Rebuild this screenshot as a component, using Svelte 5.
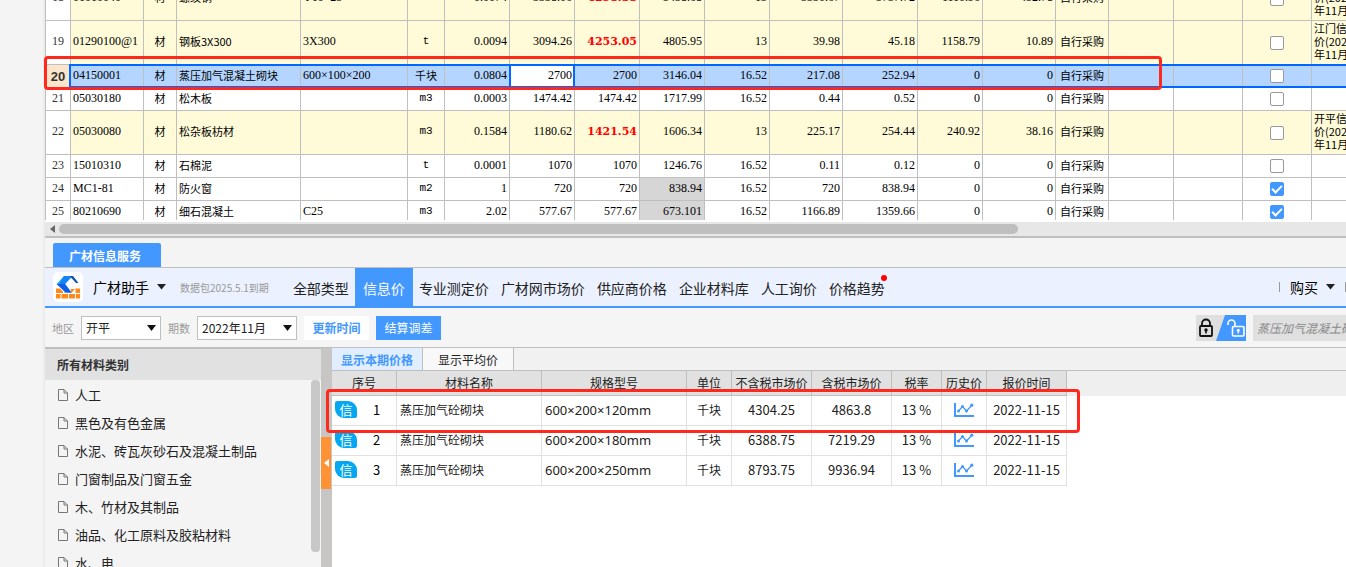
<script lang="ts">
	type Row = {
		no: number;
		code: string;
		name: string;
		spec: string;
		unit: string;
		nums: string[];
		tall?: boolean;
		checked?: boolean;
		shaded?: boolean;
		note?: string[];
	};

	const colWidths = [25, 73, 33, 124, 107, 37, 65, 65, 65, 65, 65, 73, 75, 65, 73, 53, 65, 69, 69];

	// nums: 数量, 不含税预算价, 不含税市场价, 含税市场价, 税率, 不含税合计, 含税合计, 价差, 价差合计
	let rows: Row[] = $state([
		{ no: 18, code: '01010040', name: '螺纹钢', spec: 'Φ10~25', unit: 't', nums: ['0.0074', '3338.06', '4258.38', '5438.68', '13', '3330.67', '3737.72', '1110.96', '432.78'], tall: true, note: ['江门信息', '价(2022', '年11月)'] },
		{ no: 19, code: '01290100@1', name: '钢板3X300', spec: '3X300', unit: 't', nums: ['0.0094', '3094.26', '4253.05', '4805.95', '13', '39.98', '45.18', '1158.79', '10.89'], tall: true, note: ['江门信息', '价(2022', '年11月)'] },
		{ no: 20, code: '04150001', name: '蒸压加气混凝土砌块', spec: '600×100×200', unit: '千块', nums: ['0.0804', '2700', '2700', '3146.04', '16.52', '217.08', '252.94', '0', '0'] },
		{ no: 21, code: '05030180', name: '松木板', spec: '', unit: 'm3', nums: ['0.0003', '1474.42', '1474.42', '1717.99', '16.52', '0.44', '0.52', '0', '0'] },
		{ no: 22, code: '05030080', name: '松杂板枋材', spec: '', unit: 'm3', nums: ['0.1584', '1180.62', '1421.54', '1606.34', '13', '225.17', '254.44', '240.92', '38.16'], tall: true, note: ['开平信息', '价(2022', '年11月)'] },
		{ no: 23, code: '15010310', name: '石棉泥', spec: '', unit: 't', nums: ['0.0001', '1070', '1070', '1246.76', '16.52', '0.11', '0.12', '0', '0'] },
		{ no: 24, code: 'MC1-81', name: '防火窗', spec: '', unit: 'm2', nums: ['1', '720', '720', '838.94', '16.52', '720', '838.94', '0', '0'], checked: true, shaded: true },
		{ no: 25, code: '80210690', name: '细石混凝土', spec: 'C25', unit: 'm3', nums: ['2.02', '577.67', '577.67', '673.101', '16.52', '1166.89', '1359.66', '0', '0'], checked: true, shaded: true }
	]);

	const selected = 20;

	const navItems = ['全部类型', '信息价', '专业测定价', '广材网市场价', '供应商价格', '企业材料库', '人工询价', '价格趋势'];
	let activeNav = $state('信息价');

	const categories = ['人工', '黑色及有色金属', '水泥、砖瓦灰砂石及混凝土制品', '门窗制品及门窗五金', '木、竹材及其制品', '油品、化工原料及胶粘材料', '水、电'];

	const priceCols = [
		{ label: '序号', width: 65 },
		{ label: '材料名称', width: 145 },
		{ label: '规格型号', width: 145 },
		{ label: '单位', width: 45 },
		{ label: '不含税市场价', width: 80 },
		{ label: '含税市场价', width: 80 },
		{ label: '税率', width: 50 },
		{ label: '历史价', width: 45 },
		{ label: '报价时间', width: 80 }
	];

	const prices = [
		{ spec: '600×200×120mm', net: '4304.25', gross: '4863.8' },
		{ spec: '600×200×180mm', net: '6388.75', gross: '7219.29' },
		{ spec: '600×200×250mm', net: '8793.75', gross: '9936.94' }
	];
</script>

<div class="app">
	<div class="gutter"></div>
	<main>
		<section class="top">
			<div class="grid-view">
				<table class="grid">
					<colgroup>
						{#each colWidths as w}<col style="width: {w}px" />{/each}
						<col />
					</colgroup>
					<tbody>
						{#each rows as row}
							<tr class:tall={row.tall} class:selected={row.no === selected}>
								<td class="no">{row.no}</td>
								<td class="code">{row.code}</td>
								<td class="center">材</td>
								<td>{row.name}</td>
								<td class="code">{row.spec}</td>
								<td class="center" class:unit={row.unit.length < 3 && row.unit !== '千块'}>{row.unit}</td>
								{#each row.nums as n, i}
									{#if row.no === selected && i === 1}
										<td class="num editing"><input type="text" aria-label="不含税预算价" bind:value={row.nums[1]} /></td>
									{:else}
										<td class="num" class:changed={row.tall && i === 2} class:shaded={row.shaded && i === 3}>{n}</td>
									{/if}
								{/each}
								<td class="center">自行采购</td>
								<td></td>
								<td></td>
								<td class="center"><input type="checkbox" aria-label="锁定 {row.no}" bind:checked={row.checked} /></td>
								<td class="note">{#each row.note ?? [] as line}<div>{line}</div>{/each}</td>
							</tr>
						{/each}
					</tbody>
				</table>
			</div>
			<div class="hscroll">
				<svg width="6" height="8" viewBox="0 0 6 8"><path d="M5 0v8L0 4z" fill="#666" /></svg>
				<div class="thumb"></div>
			</div>
			<div class="mark mark-row"></div>
		</section>

		<div class="service-tabs">
			<button class="service-tab">广材信息服务</button>
		</div>

		<nav>
			<div class="logo">
				<svg width="30" height="30" viewBox="0 0 30 30">
					<path d="M3 16.500h4l3 3V21H3zM22.500 16.500H27V21h-4.500zM11 20l1.500 1H11zM17.500 17h4.500L18.500 21z" fill="#ff8a1a" />
					<path d="M3 22h4.500v4.500H3zM8.500 22h6.500v4.500H8.500zM16 22h6v4.500h-6zM23 22h4v4.500h-4z" fill="#ff8a1a" />
					<path d="M3.500 12L11 4h8.500l-7.500 8z" fill="#28b4ee" />
					<path d="M11 4h8.500l-7.500 8 6.500 8.500h-6L6 12z" fill="#1683f2" />
					<path d="M3.500 12H12l6.500 8.500h-6z" fill="#0d5fe6" />
					<path d="M17 4h3l5.500 7h-2.500l-5-5.500z" fill="#134fb0" />
				</svg>
			</div>
			<button class="brand">广材助手 <svg width="9" height="6" viewBox="0 0 9 6"><path d="M0 0h9L4.500 5.500z" fill="#222" /></svg></button>
			<span class="expire">数据包2025.5.1到期</span>
			<div class="nav-items">
				{#each navItems as item}
					<button class="nav-item" class:active={item === activeNav} onclick={() => (activeNav = item)}>
						{item}{#if item === '价格趋势'}<i class="dot"></i>{/if}
					</button>
				{/each}
			</div>
			<div class="buy">
				<i class="bar"></i>
				<button class="brand">购买 <svg width="9" height="6" viewBox="0 0 9 6"><path d="M0 0h9L4.500 5.500z" fill="#222" /></svg></button>
				<i class="bar"></i>
			</div>
		</nav>

		<div class="toolbar">
			<label for="area">地区</label>
			<div class="select area">
				<select id="area"><option>开平</option></select>
				<svg width="9" height="6" viewBox="0 0 9 6"><path d="M0 0h9L4.500 6z" fill="#111" /></svg>
			</div>
			<label for="period">期数</label>
			<div class="select period">
				<select id="period"><option>2022年11月</option></select>
				<svg width="9" height="6" viewBox="0 0 9 6"><path d="M0 0h9L4.500 6z" fill="#111" /></svg>
			</div>
			<button class="tool light">更新时间</button>
			<button class="tool solid">结算调差</button>
			<button class="lock" aria-label="锁定">
				<svg width="50" height="26" viewBox="0 0 50 26">
					<path d="M0 0h50v26H0z" fill="#dfdfdf" />
					<path d="M29 0h21v26H20z" fill="#4398ff" />
					<rect x="4" y="11" width="12" height="10" rx="1" fill="none" stroke="#111" stroke-width="1.800" />
					<path d="M6 11V8.500a4 4 0 0 1 8 0V11" fill="none" stroke="#111" stroke-width="1.800" />
					<circle cx="10" cy="15" r="1.700" fill="#111" />
					<path d="M10 15v3.500" stroke="#111" stroke-width="1.500" />
					<rect x="36.500" y="11.500" width="11.500" height="9.500" rx="1" fill="none" stroke="#fff" stroke-width="1.600" />
					<path d="M32 10V8.500a3.500 3.500 0 0 1 7 0V11.500" fill="none" stroke="#fff" stroke-width="1.600" />
					<circle cx="42.300" cy="15.300" r="1.500" fill="#fff" />
					<path d="M42.300 15v3.500" stroke="#fff" stroke-width="1.300" />
				</svg>
			</button>
			<input class="search" type="text" aria-label="搜索材料" value="蒸压加气混凝土砌块" />
		</div>

		<section class="bottom">
			<aside>
				<h2>所有材料类别</h2>
				<div class="tree">
					<ul>
						{#each categories as c}
							<li>
								<svg width="10" height="12" viewBox="0 0 10 12"><path d="M.5.5h5.500l3.500 3.500v7.500h-9zM6 .5V4h3.500" fill="none" stroke="#777" /></svg>
								<span>{c}</span>
							</li>
						{/each}
					</ul>
					<div class="vthumb"></div>
				</div>
			</aside>
			<div class="splitter">
				<button aria-label="收起"><svg width="5" height="8" viewBox="0 0 5 8"><path d="M5 0v8L0 4z" fill="#fff" /></svg></button>
			</div>
			<div class="prices">
				<div class="price-tabs">
					<button class="active">显示本期价格</button>
					<button>显示平均价</button>
				</div>
				<div class="price-view">
					<table class="price-table">
						<colgroup>
							{#each priceCols as c}<col style="width: {c.width}px" />{/each}
						</colgroup>
						<thead>
							<tr>{#each priceCols as c}<th>{c.label}</th>{/each}</tr>
						</thead>
						<tbody>
							{#each prices as p, i}
								<tr>
									<td><div class="seq"><span class="badge">信</span><span class="idx">{i + 1}</span></div></td>
									<td class="text">蒸压加气砼砌块</td>
									<td class="text size">{p.spec}</td>
									<td>千块</td>
									<td class="val">{p.net}</td>
									<td class="val">{p.gross}</td>
									<td class="val">13 %</td>
									<td>
										<svg class="chart" width="20" height="14" viewBox="0 0 20 14" fill="none" stroke="#4398ff">
											<path d="M1 0v13h19" stroke-width="2" />
											<path d="M4.500 8l4-4.500 4 4.500L18 2" stroke-width="1.200" />
											<g fill="#4398ff" stroke="none">
												<circle cx="4.500" cy="8" r="1.500" /><circle cx="8.500" cy="3.500" r="1.500" />
												<circle cx="12.500" cy="8" r="1.500" /><circle cx="17.800" cy="2.200" r="1.600" />
											</g>
										</svg>
									</td>
									<td class="val">2022-11-15</td>
								</tr>
							{/each}
						</tbody>
					</table>
				</div>
				<div class="mark mark-price"></div>
			</div>
		</section>
	</main>
</div>

<style>
	:global(body) { overflow: hidden; }
	.app {
		display: flex;
		height: 100vh;
		font-family: 'Noto Sans CJK SC', sans-serif;
		font-size: 12px;
		color: #222;
		background: #f5f5f5;
	}
	.app * { box-sizing: border-box; }
	button { font: inherit; color: inherit; border: 0; padding: 0; background: none; white-space: nowrap; }
	svg { display: block; flex: none; }
	.gutter { flex: none; width: 45px; border-right: 2px solid #ececec; background: #f4f4f4; }
	main { flex: 1; min-width: 0; display: flex; flex-direction: column; }

	.top { position: relative; flex: none; background: #fff; border-bottom: 2px solid #bfbfbf; }
	.grid-view { height: 220px; overflow: hidden; margin-bottom: 2px; }
	.grid {
		width: 100%;
		margin-top: -23px;
		table-layout: fixed;
		border-collapse: separate;
		border-spacing: 0;
		font-size: 11px;
		line-height: 13px;
		color: #000;
	}
	.grid tr { height: 23px; }
	.grid tr.tall { height: 44px; background: #fffbd8; }
	.grid td {
		padding: 0 2px 2px;
		border-left: 1px solid #bfbfbf;
		border-bottom: 1px solid #bfbfbf;
		white-space: nowrap;
		overflow: hidden;
	}
	.grid .no, .grid .code, .grid .num { font-family: 'Liberation Serif', 'Noto Sans CJK SC', serif; font-size: 12px; }
	.grid .no { text-align: center; background: #fff; color: #333; }
	.grid .unit { font-family: 'Liberation Mono', monospace; }
	.grid .center { text-align: center; }
	.grid .num { text-align: right; }
	.grid .changed { color: #f00; font: bold 11px/13px 'DejaVu Serif', serif; }
	.grid .shaded { background: #d6d6d6; }
	.grid .note { padding-right: 0; }
	.grid .selected { position: relative; background: #b3d5ff; }
	.grid .selected .no { padding-bottom: 0; background: #fde5cb; font: bold 13px/13px 'Liberation Sans', sans-serif; }
	.grid .selected .note::after {
		content: '';
		position: absolute;
		inset: -1px 0 0 24px;
		border: 2px solid #0067ff;
		border-right: 0;
		pointer-events: none;
	}
	.grid .editing { padding: 0; border-left-color: #0067ff; }
	.grid .editing + td { border-left-color: #0067ff; }
	.editing input {
		display: block;
		width: 100%;
		height: 22px;
		padding: 0 1px 2px;
		border: solid #0067ff;
		border-width: 0 1px;
		background: #fff;
		text-align: right;
		font: inherit;
		outline: 0;
	}
	input[type='checkbox'] {
		appearance: none;
		display: block;
		width: 14px;
		height: 14px;
		margin: 2px auto 0;
		border: 1px solid #999;
		border-radius: 2px;
		background: #fff;
	}
	input[type='checkbox']:checked { background: #4398ff; border-color: #4398ff; }
	input[type='checkbox']:checked::before {
		content: '';
		display: block;
		box-sizing: border-box;
		width: 10px;
		height: 6px;
		margin: 2px 1px;
		border: solid #fff;
		border-width: 0 0 2px 2px;
		transform: rotate(-45deg);
	}
	.hscroll { display: flex; align-items: center; gap: 2px; height: 14px; padding-left: 5px; background: #e7e7e7; }
	.thumb { width: 74%; height: 10px; margin-left: 1px; border-radius: 5px; background: #bfbfbf; }
	.mark { position: absolute; border: 3px solid #ff281c; border-radius: 4px; pointer-events: none; z-index: 2; }
	.mark-row { left: -1px; top: 56px; width: 1118px; height: 34px; }

	.service-tabs { flex: none; display: flex; align-items: flex-end; height: 30px; padding-left: 8px; border-bottom: 1px solid #bfbfbf; background: #f4f4f4; }
	.service-tab { height: 24px; padding: 0 20px 0 16px; border-radius: 2px 2px 0 0; background: #4398ff; color: #fff; font-weight: bold; }

	nav { flex: none; display: flex; align-items: center; height: 40px; padding-left: 8px; border-bottom: 2px solid #4398ff; background: #ebf1ff; font-size: 14px; }
	.logo { width: 30px; height: 30px; margin-right: 10px; border-radius: 5px; background: #fff; }
	.brand { display: flex; align-items: center; gap: 8px; color: #000; }
	.expire { margin: 0 18px 0 14px; color: #999; font-size: 10px; white-space: nowrap; }
	.nav-items { display: flex; align-self: stretch; }
	.nav-item { position: relative; padding: 2px 6px 0; }
	.nav-item.active { padding: 2px 8px 0; background: #4398ff; color: #fff; }
	.dot { position: absolute; right: 4px; top: 7px; width: 6px; height: 6px; border-radius: 50%; background: #f00; }
	.buy { display: flex; align-items: center; gap: 10px; margin-left: auto; }
	.bar { width: 1px; height: 10px; background: #999; }

	.toolbar { flex: none; display: flex; align-items: center; height: 39px; padding-left: 7px; background: #f5f5f5; }
	label { margin-right: 7px; color: #999; font-size: 11px; }
	.select { position: relative; height: 24px; margin-right: 7px; }
	.select select {
		appearance: none;
		width: 100%;
		height: 100%;
		padding: 0 4px;
		border: 1px solid #bfbfbf;
		border-radius: 0;
		background: #fff;
		color: #222;
		font: inherit;
	}
	.select svg { position: absolute; right: 5px; top: 9px; pointer-events: none; }
	.area { width: 80px; }
	.period { width: 100px; }
	.tool { width: 65px; height: 24px; margin-right: 7px; }
	.light { background: #fff; color: #4398ff; font-weight: bold; }
	.solid { background: #4398ff; color: #fff; }
	.lock { margin: 0 7px 0 auto; }
	.search { width: 93px; height: 26px; padding: 0 0 0 4px; border: 0; background: #e0e0e0; color: #888; font: italic 12px 'Noto Sans CJK SC', sans-serif; }

	.bottom { flex: 1; min-height: 0; display: flex; border-top: 1px solid #bfbfbf; }
	aside { flex: none; width: 276px; display: flex; flex-direction: column; border-top: 1px solid #bfbfbf; background: #f4f4f4; }
	h2 { flex: none; margin: 0; height: 31px; padding-left: 12px; background: #e1e1e1; font-size: 12px; line-height: 31px; font-weight: bold; color: #333; }
	.tree { flex: 1; min-height: 0; display: flex; overflow: hidden; }
	ul { flex: 1; margin: 0; padding: 1px 0 0 13px; list-style: none; font-size: 13px; }
	li { display: flex; align-items: center; gap: 7px; height: 28px; line-height: 28px; }
	.vthumb { width: 9px; height: 172px; margin-right: 1px; border-radius: 4px; background: #c8c8c8; }
	.splitter { flex: none; width: 11px; background: #c8c6c4; }
	.splitter button { display: flex; align-items: center; justify-content: center; width: 10px; height: 52px; margin-top: 89px; background: #ff9234; }
	.prices { flex: 1; min-width: 0; position: relative; background: #fff; }
	.price-tabs { display: flex; height: 23px; border-bottom: 1px solid #bfbfbf; background: #f1f1f1; }
	.price-tabs button { width: 91px; border-right: 1px solid #bfbfbf; background: #f8f8f8; }
	.price-tabs .active { background: #e0eeff; color: #4398ff; font-weight: bold; }
	.price-view { background: linear-gradient(#efefef, #efefef) 0 0 / 100% 25px no-repeat; }
	.price-table { width: 735px; table-layout: fixed; border-collapse: separate; border-spacing: 0; }
	th { height: 25px; padding: 0; border: solid #bfbfbf; border-width: 0 1px 1px 0; background: #e1e1e1; font-weight: normal; line-height: 18px; white-space: nowrap; }
	.price-table td { height: 30px; padding: 0 0 2px; border: solid #e1e1e1; border-width: 0 1px 1px 0; text-align: center; line-height: 18px; white-space: nowrap; }
	.price-table .text { padding-left: 3px; text-align: left; }
	.val, .idx { font-size: 13px; }
	.size { font-family: 'Noto Sans', sans-serif; font-size: 13px; }
	.seq { display: flex; align-items: center; padding-left: 3px; }
	.badge { width: 22px; height: 17px; border-radius: 2px 9px 2px 9px; background: #05a8f0; color: #fff; font-size: 13px; line-height: 17px; }
	.idx { flex: 1; color: #000; }
	.chart { margin: 0 auto; }
	.mark-price { left: -6px; top: 41px; width: 754px; height: 44px; }
</style>
